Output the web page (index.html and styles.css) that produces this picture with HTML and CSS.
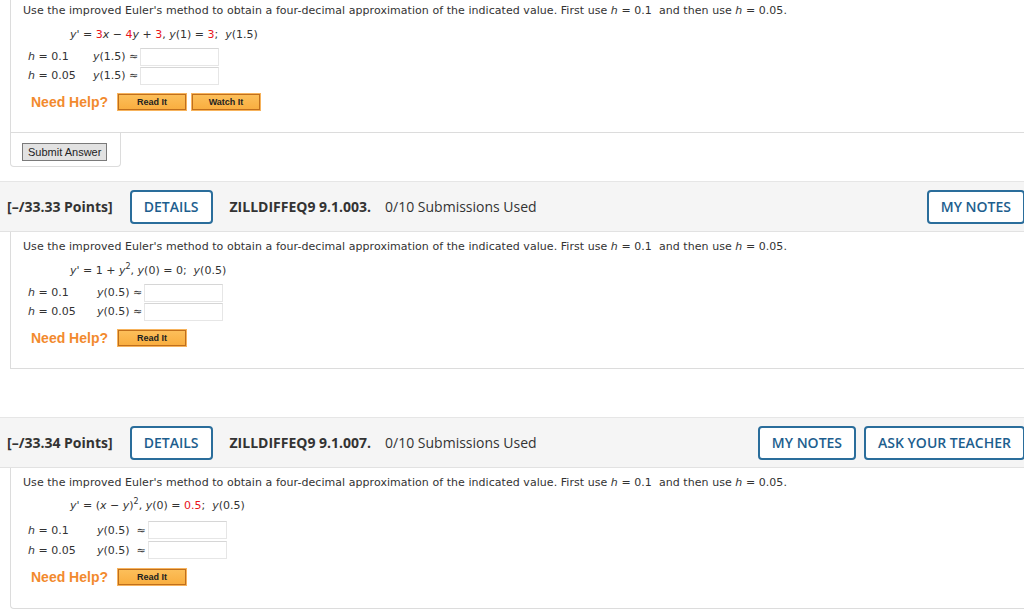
FILE: index.html
```html
<!DOCTYPE html>
<html lang="en">
<head>
    <meta charset="UTF-8">
    <meta name="viewport" content="width=device-width, initial-scale=1.0">
    <title>Assignment</title>
    <link rel="stylesheet" href="styles.css">
</head>
<body>

<!-- question 1 (scrolled, header above the fold) -->
<div class="question first">
    <p class="prompt">Use the improved Euler's method to obtain a four-decimal approximation of the indicated value. First use <i>h</i> = 0.1 &nbsp;and then use <i>h</i> = 0.05.</p>
    <p class="equation"><i>y</i>' = <span class="red">3</span><i>x</i> &minus; <span class="red">4</span><i>y</i> + <span class="red">3</span>, <i>y</i>(1) = <span class="red">3</span>; &nbsp;<i>y</i>(1.5)</p>
    <div class="answers a1">
        <div class="row"><span class="h"><i>h</i> = 0.1</span><span class="lbl"><i>y</i>(1.5) &asymp;</span><span class="input"></span></div>
        <div class="row"><span class="h"><i>h</i> = 0.05</span><span class="lbl"><i>y</i>(1.5) &asymp;</span><span class="input"></span></div>
    </div>
    <div class="help">
        <span class="need">Need Help?</span>
        <button class="helpbtn">Read It</button>
        <button class="helpbtn">Watch It</button>
    </div>
</div>
<div class="submit-box">
    <button class="submit">Submit Answer</button>
</div>

<!-- question 2 -->
<div class="qhead">
    <span class="points">[&ndash;/33.33 Points]</span>
    <button class="outline">DETAILS</button>
    <span class="code">ZILLDIFFEQ9 9.1.003.</span>
    <span class="subs">0/10 Submissions Used</span>
    <div class="right">
        <button class="outline">MY NOTES</button>
    </div>
</div>
<div class="question">
    <p class="prompt">Use the improved Euler's method to obtain a four-decimal approximation of the indicated value. First use <i>h</i> = 0.1 &nbsp;and then use <i>h</i> = 0.05.</p>
    <p class="equation"><i>y</i>' = 1 + <i>y</i><sup>2</sup>, <i>y</i>(0) = 0; &nbsp;<i>y</i>(0.5)</p>
    <div class="answers a2">
        <div class="row"><span class="h"><i>h</i> = 0.1</span><span class="lbl"><i>y</i>(0.5) &asymp;</span><span class="input"></span></div>
        <div class="row"><span class="h"><i>h</i> = 0.05</span><span class="lbl"><i>y</i>(0.5) &asymp;</span><span class="input"></span></div>
    </div>
    <div class="help">
        <span class="need">Need Help?</span>
        <button class="helpbtn">Read It</button>
    </div>
</div>
<div class="spacer"></div>

<!-- question 3 -->
<div class="qhead">
    <span class="points">[&ndash;/33.34 Points]</span>
    <button class="outline">DETAILS</button>
    <span class="code">ZILLDIFFEQ9 9.1.007.</span>
    <span class="subs">0/10 Submissions Used</span>
    <div class="right">
        <button class="outline">MY NOTES</button>
        <button class="outline">ASK YOUR TEACHER</button>
    </div>
</div>
<div class="question last">
    <p class="prompt">Use the improved Euler's method to obtain a four-decimal approximation of the indicated value. First use <i>h</i> = 0.1 &nbsp;and then use <i>h</i> = 0.05.</p>
    <p class="equation"><i>y</i>' = (<i>x</i> &minus; <i>y</i>)<sup>2</sup>, <i>y</i>(0) = <span class="red">0.5</span>; &nbsp;<i>y</i>(0.5)</p>
    <div class="answers a3">
        <div class="row tall"><span class="h"><i>h</i> = 0.1</span><span class="lbl"><i>y</i>(0.5) &nbsp;&asymp;</span><span class="input"></span></div>
        <div class="row tall"><span class="h"><i>h</i> = 0.05</span><span class="lbl"><i>y</i>(0.5) &nbsp;&asymp;</span><span class="input"></span></div>
    </div>
    <div class="help">
        <span class="need">Need Help?</span>
        <button class="helpbtn">Read It</button>
    </div>
</div>

</body>
</html>
```

FILE: styles.css
```css
body {
    margin: 0;
    width: 1025px;
    font-family: "DejaVu Sans", Verdana, sans-serif;
    font-size: 11px;
    color: #333;
    background-color: #fff;
    overflow: hidden;
}

p {
    margin: 0;
}

.red {
    color: #e8141b;
}

sup {
    font-size: 8px;
    line-height: 0;
}

/* question body */
.question {
    margin-left: 10px;
    border-left: 1px solid #dcdcdc;
    border-bottom: 1px solid #dcdcdc;
    padding: 8px 0 21px 12px;
}

.question.first {
    margin-top: -4px;
}

.question.last {
    padding-bottom: 22px;
    border-bottom-left-radius: 4px;
}

.prompt {
    line-height: 14px;
    letter-spacing: 0.05px;
}

.equation {
    line-height: 14px;
    margin: 10px 0 0 47px;
}

.last .equation {
    margin-top: 9px;
}

.answers {
    margin: 5px 0 0 5px;
}

.last .answers {
    margin-top: 7px;
}

.row {
    display: flex;
    align-items: center;
    height: 19px;
}

.row.tall {
    height: 20px;
}

.h {
    width: 65px;
}

.a2 .h {
    width: 69px;
}

.a3 .h {
    width: 69px;
}

.lbl {
    padding-right: 2px;
}

.input {
    width: 77px;
    height: 16px;
    border: 1px solid #e6e6e6;
    border-top-color: #d6d6d6;
    background-color: #fff;
}

.help {
    display: flex;
    align-items: center;
    gap: 4px;
    margin: 8px 0 0 8px;
}

.need {
    font-family: "Liberation Sans", Arial, sans-serif;
    font-weight: bold;
    font-size: 14px;
    color: #f28a2e;
    margin-right: 5px;
}

.helpbtn {
    font-family: "Liberation Sans", Arial, sans-serif;
    font-weight: bold;
    font-size: 9px;
    color: #222;
    height: 18px;
    width: 70px;
    padding: 0;
    border: 1px solid #f7b35c;
    box-shadow: inset 0 0 0 1px #c06f1c;
    background: linear-gradient(#fcc05c, #f9ad3e);
}

/* submit area */
.submit-box {
    margin-left: 10px;
    width: 98px;
    padding: 10px 0 5px 11px;
    border-left: 1px solid #dcdcdc;
    border-right: 1px solid #dcdcdc;
    border-bottom: 1px solid #dcdcdc;
    border-bottom-left-radius: 4px;
    border-bottom-right-radius: 4px;
    margin-bottom: 14px;
}

.submit {
    font-family: "Liberation Sans", Arial, sans-serif;
    font-size: 11px;
    color: #222;
    height: 18px;
    padding: 0 5px;
    border: 1px solid #7a7a7a;
    background-color: #e2e2e2;
}

.spacer {
    height: 48px;
}

/* question header */
.qhead {
    display: flex;
    align-items: center;
    height: 49px;
    padding-left: 7px;
    background-color: #f5f5f5;
    border-top: 1px solid #e6e6e6;
    border-bottom: 1px solid #e2e2e2;
    font-family: "Open Sans", sans-serif;
    font-size: 14px;
    color: #333;
}

.points {
    font-weight: bold;
    margin-right: 17px;
}

.code {
    font-weight: bold;
    margin: 0 14px 0 17px;
}

.outline {
    font-family: "Open Sans", sans-serif;
    font-size: 14px;
    font-weight: 600;
    color: #1d5e8e;
    background-color: #fff;
    border: 2px solid #2a6d9b;
    border-radius: 4px;
    height: 34px;
    padding: 0 12px;
}

.right {
    margin-left: auto;
    display: flex;
    gap: 8px;
}
```
